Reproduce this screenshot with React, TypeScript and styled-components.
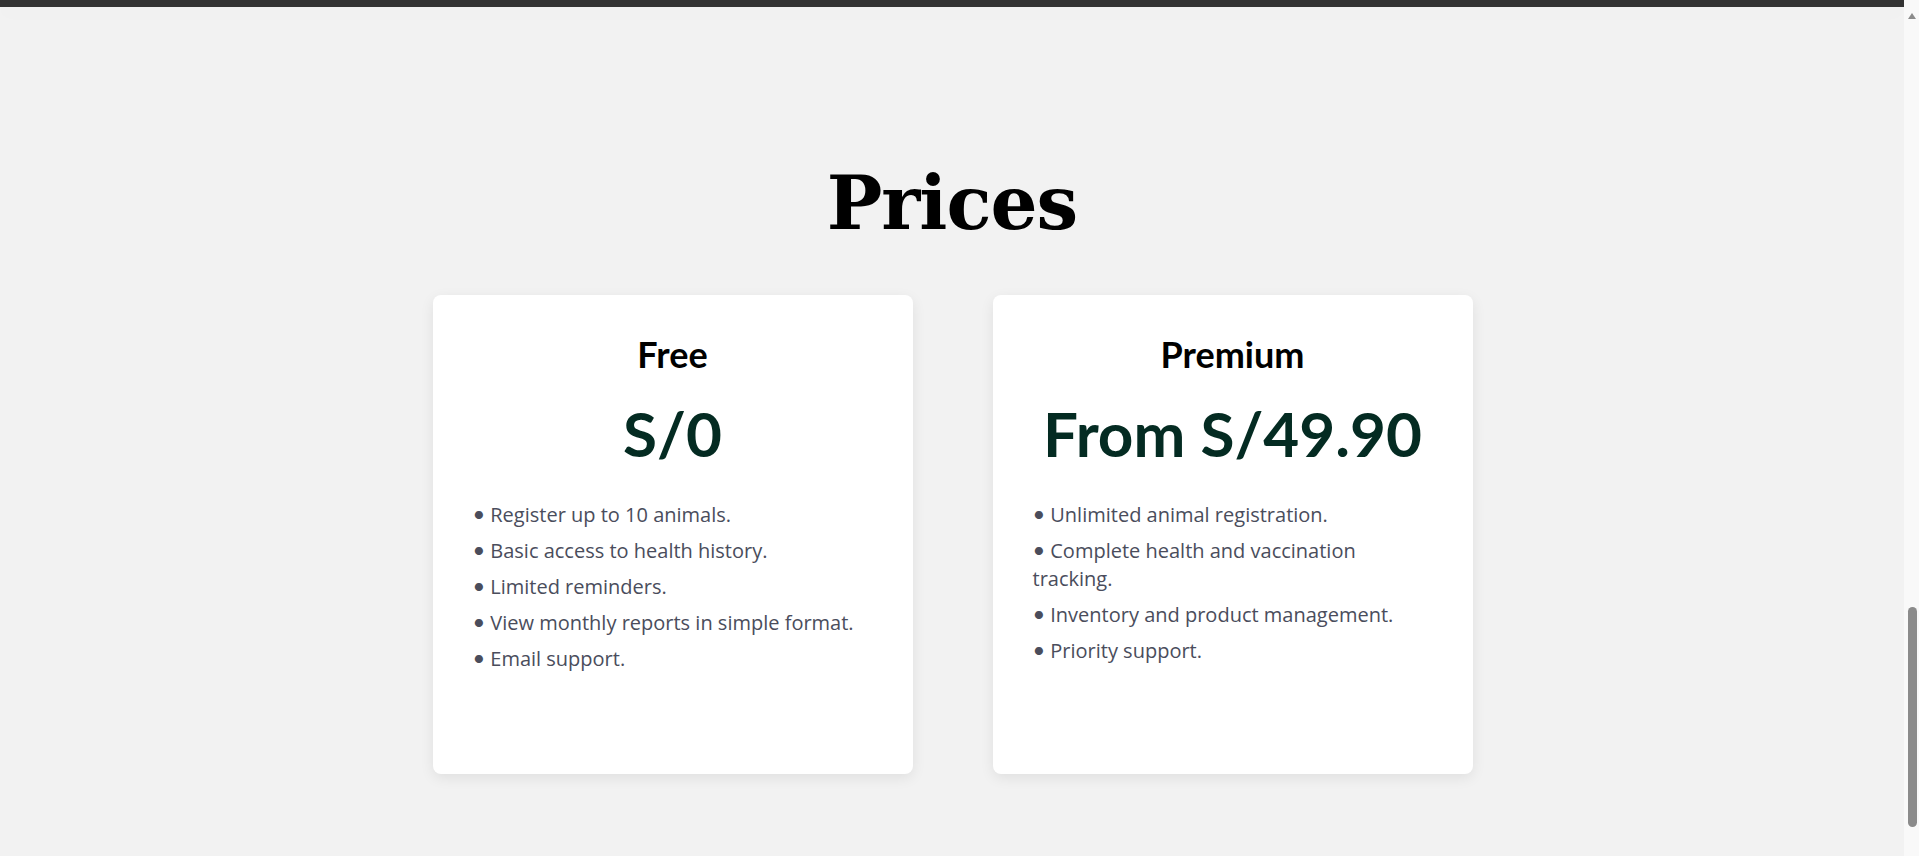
import React from "react";
import styled, { createGlobalStyle } from "styled-components";

const GlobalStyle = createGlobalStyle`
  html, body {
    margin: 0;
    padding: 0;
    height: 856px;
    overflow: hidden;
    background: #f2f2f2;
  }
  * { box-sizing: border-box; }
`;

const Page = styled.div`
  display: grid;
  grid-template-columns: 1fr 15px;
  height: 856px;
`;

const Main = styled.main`
  display: flex;
  flex-direction: column;
  min-width: 0;
`;

const TopBar = styled.div`
  height: 7px;
  background: #333333;
  box-shadow: 0 6px 18px rgba(0, 0, 0, 0.025);
`;

const Section = styled.section`
  display: flex;
  flex-direction: column;
  align-items: center;
  padding-top: 152px;
`;

const Heading = styled.h2`
  margin: 0;
  font-family: "DejaVu Serif", "Liberation Serif", serif;
  font-weight: 700;
  font-size: 74px;
  line-height: 88px;
  color: #000;
  letter-spacing: -1px;
`;

const Cards = styled.div`
  display: grid;
  grid-template-columns: repeat(2, 480px);
  gap: 80px;
  margin-top: 48px;
  margin-left: 1px;
`;

const Card = styled.div`
  background: #ffffff;
  border-radius: 8px;
  height: 479px;
  padding: 37px 40px 40px;
  box-shadow: 0 4px 14px rgba(0, 0, 0, 0.08);
  font-family: Lato, "Noto Sans", sans-serif;
`;

const Title = styled.h3`
  margin: 0;
  text-align: center;
  font-size: 36px;
  font-weight: 700;
  line-height: 44px;
  color: #000;
`;

const Price = styled.div`
  margin-top: 19px;
  text-align: center;
  font-size: 62px;
  font-weight: 700;
  line-height: 76px;
  color: #042b22;
`;

const List = styled.ul`
  list-style: none;
  margin: 30px 0 0;
  padding: 0 16px 0 0;
  display: flex;
  flex-direction: column;
  gap: 8px;
`;

const Item = styled.li`
  font-family: "Open Sans", "Noto Sans", sans-serif;
  font-size: 20px;
  line-height: 28px;
  color: #4a4d5c;
  &::before {
    content: "•";
    font-family: Lato, sans-serif;
    font-size: 22px;
    line-height: 0;
    margin-right: 5px;
  }
`;

const ScrollTrack = styled.div`
  background: #f9f9f9;
  display: flex;
  flex-direction: column;
  align-items: center;
  padding-top: 13px;
`;

const Arrow = styled.div`
  width: 0;
  height: 0;
  border-left: 4px solid transparent;
  border-right: 4px solid transparent;
  border-bottom: 6px solid #8b8b8b;
  margin-left: 1px;
`;

const Thumb = styled.div`
  width: 9px;
  height: 220px;
  margin-top: 588px;
  margin-left: 1px;
  border-radius: 5px;
  background: #8b8b8b;
`;

const plans = [
  {
    name: "Free",
    price: "S/0",
    features: [
      "Register up to 10 animals.",
      "Basic access to health history.",
      "Limited reminders.",
      "View monthly reports in simple format.",
      "Email support.",
    ],
  },
  {
    name: "Premium",
    price: "From S/49.90",
    features: [
      "Unlimited animal registration.",
      "Complete health and vaccination tracking.",
      "Inventory and product management.",
      "Priority support.",
    ],
  },
];

export default function App() {
  return (
    <>
      <GlobalStyle />
      <Page>
        <Main>
          <TopBar />
          <Section>
            <Heading>Prices</Heading>
            <Cards>
              {plans.map((p) => (
                <Card key={p.name}>
                  <Title>{p.name}</Title>
                  <Price>{p.price}</Price>
                  <List>
                    {p.features.map((f) => (
                      <Item key={f}>{f}</Item>
                    ))}
                  </List>
                </Card>
              ))}
            </Cards>
          </Section>
        </Main>
        <ScrollTrack>
          <Arrow />
          <Thumb />
        </ScrollTrack>
      </Page>
    </>
  );
}
